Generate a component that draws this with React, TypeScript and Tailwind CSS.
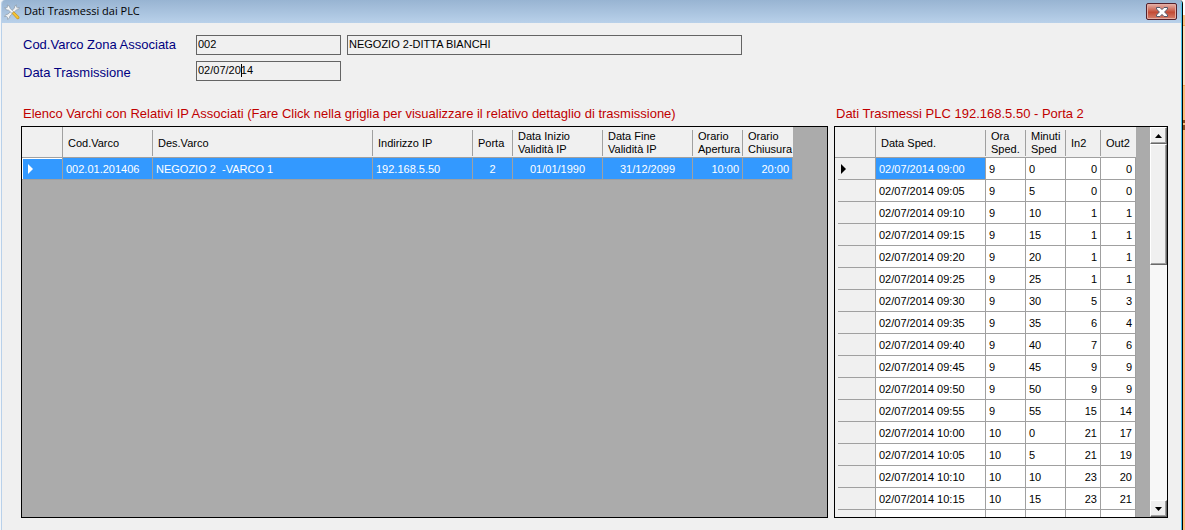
import { useRef } from "react";

const gates = [
  ["002.01.201406", "NEGOZIO 2  -VARCO 1", "192.168.5.50", "2", "01/01/1990", "31/12/2099", "10:00", "20:00"],
];

const gateColumns = [
  { label: "Cod.Varco", width: "w-[90px]", align: "text-left" },
  { label: "Des.Varco", width: "w-[220px]", align: "text-left" },
  { label: "Indirizzo IP", width: "w-[100px]", align: "text-left" },
  { label: "Porta", width: "w-[40px]", align: "text-center" },
  { label: "Data Inizio\nValidità IP", width: "w-[90px]", align: "text-center" },
  { label: "Data Fine\nValidità IP", width: "w-[90px]", align: "text-center" },
  { label: "Orario\nApertura", width: "w-[50px]", align: "text-right" },
  { label: "Orario\nChiusura", width: "w-[50px]", align: "text-right" },
];

const readingColumns = [
  { label: "Data Sped.", width: "w-[110px]", align: "text-left" },
  { label: "Ora\nSped.", width: "w-[40px]", align: "text-left" },
  { label: "Minuti\nSped", width: "w-[40px]", align: "text-left" },
  { label: "In2", width: "w-[35px]", align: "text-right" },
  { label: "Out2", width: "w-[35px]", align: "text-right" },
];

const readings: [number, number, number, number][] = [
  [9, 0, 0, 0],
  [9, 5, 0, 0],
  [9, 10, 1, 1],
  [9, 15, 1, 1],
  [9, 20, 1, 1],
  [9, 25, 1, 1],
  [9, 30, 5, 3],
  [9, 35, 6, 4],
  [9, 40, 7, 6],
  [9, 45, 9, 9],
  [9, 50, 9, 9],
  [9, 55, 15, 14],
  [10, 0, 21, 17],
  [10, 5, 21, 19],
  [10, 10, 23, 20],
  [10, 15, 23, 21],
  [10, 20, 23, 21],
];

const pad = (n: number) => String(n).padStart(2, "0");

type Column = { label: string; width: string; align: string };

function HeaderRow({ columns }: { columns: Column[] }) {
  return (
    <thead>
      <tr className="h-[31px] bg-[#f0f0f0]">
        <th className="w-[41px] border-r border-b border-[#a0a0a0] p-0" aria-label="Riga" />
        {columns.map((c, i) => (
          <th key={c.label} className={`${c.width} border-b border-[#a0a0a0] px-0 pt-[2px] pb-0 text-left font-normal`}>
            <div
              className={`flex h-[26px] items-center pl-[5px] leading-[13px] whitespace-pre ${
                i < columns.length - 1 ? "border-r border-[#a0a0a0]" : ""
              }`}
            >
              {c.label}
            </div>
          </th>
        ))}
      </tr>
    </thead>
  );
}

function RowArrow({ className }: { className: string }) {
  return (
    <svg viewBox="0 0 5 10" className={`block h-[10px] w-[5px] ${className}`} aria-hidden="true">
      <path d="M0 0 L5 5 L0 10 Z" fill="currentColor" />
    </svg>
  );
}

function ToolsIcon() {
  return (
    <svg viewBox="0 0 16 16" className="h-4 w-4" aria-hidden="true">
      <path d="M12.4 0.8 L12.2 2.8 L13.4 3.8 L15.3 3.4 L14.6 5.4 L12.4 6 L5.8 12.2 L5.6 14 L3.6 15.4 L3.5 13.4 L2.4 12.4 L0.6 12.6 L1.8 10.6 L3.8 10.2 L10.4 4.2 L10.6 2.2 Z" fill="#eef1f3" stroke="#8d9aa6" strokeWidth=".7" />
      <path d="M3.2 1 L5.4 2 L6.2 4.4 L9.6 7.8 L8 9.4 L4.6 6.2 L2.2 5.8 L0.8 3.6 L2.8 3.8 L3.7 2.9 Z" fill="#f7f9fa" stroke="#8d9aa6" strokeWidth=".7" />
      <path d="M8.2 9.4 L9.8 7.8 L15 12.8 Q15.8 15.2 13.2 14.9 Z" fill="#f5c433" stroke="#c48c18" strokeWidth=".7" />
    </svg>
  );
}

function ScrollButton({ up, onClick }: { up?: boolean; onClick: () => void }) {
  return (
    <button
      type="button"
      onClick={onClick}
      aria-label={up ? "Scorri su" : "Scorri giù"}
      className="flex h-[17px] w-full shrink-0 items-center justify-center border border-t-white border-r-[#696969] border-b-[#696969] border-l-white bg-[#f0f0f0] shadow-[inset_-1px_-1px_0_#a0a0a0]"
    >
      <svg viewBox="0 0 7 4" className="h-1 w-[7px]" aria-hidden="true">
        <path d={up ? "M0 4 L3.5 0 L7 4 Z" : "M0 0 L3.5 4 L7 0 Z"} fill="#000" />
      </svg>
    </button>
  );
}

const fieldClass = "h-5 border border-[#646464] bg-[#f0f0f0] px-px pb-[2px] outline-none";

export default function App() {
  const list = useRef<HTMLDivElement>(null);
  const scroll = (top: number) => list.current?.scrollBy({ top });

  return (
    <div className="flex h-screen bg-[#f4f6f8] pl-px font-['Liberation_Sans',Arial,sans-serif] text-black">
      <main className="flex min-w-0 flex-1 flex-col overflow-hidden rounded-t-[4px] border-r border-l border-r-black border-l-[#b9d1ea] bg-[#f0f0f0]">
        <div className="flex min-h-0 flex-1 flex-col border-r border-[#4cc4ea]">
          <header className="flex h-[23px] shrink-0 items-center bg-linear-to-b from-[#98b4d2] to-[#b9d1ea] pr-1 pl-[2px]">
            <ToolsIcon />
            <h1 className="ml-1 flex-1 font-['Open_Sans','Noto_Sans',sans-serif] text-[11px]">Dati Trasmessi dai PLC</h1>
            <button
              type="button"
              aria-label="Chiudi"
              className="flex h-[17px] w-[31px] items-center justify-center rounded-[2px] border border-[#54202b] bg-linear-to-b from-[#dfa096] from-10% via-[#c24a35] via-55% to-[#d57f6c] shadow-[inset_0_0_0_1px_#e3aca2]"
            >
              <svg viewBox="0 0 12 10" className="h-[10px] w-3" aria-hidden="true">
                <path d="M.5 .5 H4 L6 2.6 L8 .5 H11.5 V2 L8.6 5 L11.5 8 V9.5 H8 L6 7.4 L4 9.5 H.5 V8 L3.4 5 L.5 2 Z" fill="#fff" stroke="#54596b" strokeWidth="1" />
              </svg>
            </button>
          </header>

          <form className="flex shrink-0 flex-col gap-[6px] px-[21px] pt-3 text-[11px]" onSubmit={(e) => e.preventDefault()}>
            <div className="flex">
              <label htmlFor="cod" className="w-[173px] text-[13px] leading-5 text-[#000080]">Cod.Varco Zona Associata</label>
              <input id="cod" readOnly defaultValue="002" className={`${fieldClass} w-[145px]`} />
              <input aria-label="Descrizione zona" readOnly defaultValue="NEGOZIO 2-DITTA BIANCHI" className={`${fieldClass} ml-[6px] w-[395px]`} />
            </div>
            <div className="flex">
              <label htmlFor="data" className="w-[173px] pt-[2px] text-[13px] leading-5 text-[#000080]">Data Trasmissione</label>
              <div className="relative h-5">
                <input id="data" defaultValue="02/07/2014" className={`${fieldClass} block w-[145px]`} />
                <span className="pointer-events-none absolute top-[3px] left-[45px] h-[13px] w-px bg-black" />
              </div>
            </div>
          </form>

          <div className="flex min-h-0 flex-1 gap-[6px] pt-[22px] pr-[13px] pb-3 pl-[19px]">
            <section className="flex min-w-0 flex-1 flex-col">
              <h2 className="h-[21px] truncate pl-[2px] text-[13px] leading-[18px] text-[#c00000]">
                Elenco Varchi con Relativi IP Associati (Fare Click nella griglia per visualizzare il relativo dettaglio di trasmissione)
              </h2>
              <div className="min-h-0 flex-1 overflow-auto border border-black bg-[#ababab]">
                <table className="w-[771px] table-fixed border-separate border-spacing-0 text-[11px]">
                  <HeaderRow columns={gateColumns} />
                  <tbody>
                    {gates.map((row) => (
                      <tr key={row[0]} className="h-[22px] bg-[#3399ff] text-white">
                        <td className="border-r border-b border-[#a0a0a0] p-0 pl-[6px] shadow-[inset_1px_1px_0_#fff]">
                          <RowArrow className="text-white" />
                        </td>
                        {row.map((value, i) => (
                          <td key={i} className={`border-r border-b border-[#a0a0a0] px-[3px] pt-px pb-0 whitespace-pre ${gateColumns[i].align}`}>{value}</td>
                        ))}
                      </tr>
                    ))}
                  </tbody>
                </table>
              </div>
            </section>

            <section className="flex w-[334px] shrink-0 flex-col">
              <h2 className="h-[21px] truncate pl-[2px] text-[13px] leading-[18px] text-[#c00000]">Dati Trasmessi PLC 192.168.5.50 - Porta 2</h2>
              <div className="flex min-h-0 flex-1 border border-black bg-[#ababab]">
                <div ref={list} className="min-w-0 flex-1 overflow-y-auto [scrollbar-width:none]">
                  <table className="w-[301px] table-fixed border-separate border-spacing-0 text-[11px]">
                    <HeaderRow columns={readingColumns} />
                    <tbody>
                      {readings.map(([hour, minute, entered, left], r) => (
                        <tr key={r} className="h-[22px] bg-white">
                          <td className="border-r border-[#a0a0a0] bg-[#f0f0f0] p-0">
                            <div className="ml-[3px] flex h-[22px] items-center border-b border-[#a0a0a0] pl-[3px]">
                              {r === 0 && <RowArrow className="text-black" />}
                            </div>
                          </td>
                          {[`02/07/2014 ${pad(hour)}:${pad(minute)}`, hour, minute, entered, left].map((value, i) => (
                            <td
                              key={i}
                              className={`border-r border-b border-[#a0a0a0] px-[3px] pt-px pb-0 whitespace-nowrap ${readingColumns[i].align} ${
                                r === 0 && i === 0 ? "bg-[#3399ff] text-white" : ""
                              }`}
                            >
                              {value}
                            </td>
                          ))}
                        </tr>
                      ))}
                    </tbody>
                  </table>
                </div>
                <div className="flex w-[17px] shrink-0 flex-col bg-[#f7f7f7]">
                  <ScrollButton up onClick={() => scroll(-22)} />
                  <div className="min-h-0 flex-1">
                    <div className="h-[34%] border border-t-white border-r-[#696969] border-b-[#696969] border-l-white bg-[#f0f0f0] shadow-[inset_-1px_-1px_0_#a0a0a0]" />
                  </div>
                  <ScrollButton onClick={() => scroll(22)} />
                </div>
              </div>
            </section>
          </div>
        </div>
      </main>
      <aside className="flex w-[2px] shrink-0 flex-col bg-[#fbbd78]" aria-hidden="true">
        <div className="h-[15px] bg-white" />
        <div className="h-[10px] bg-[#fbc384]" />
        <div className="h-[61px] border-t border-b border-[#f5a653] bg-[#fddcb5]" />
        <div className="mt-[34px] h-[3px] bg-[#8a4a1c]" />
        <div className="mt-[2px] h-[5px] bg-[#8a4a1c]" />
      </aside>
    </div>
  );
}
